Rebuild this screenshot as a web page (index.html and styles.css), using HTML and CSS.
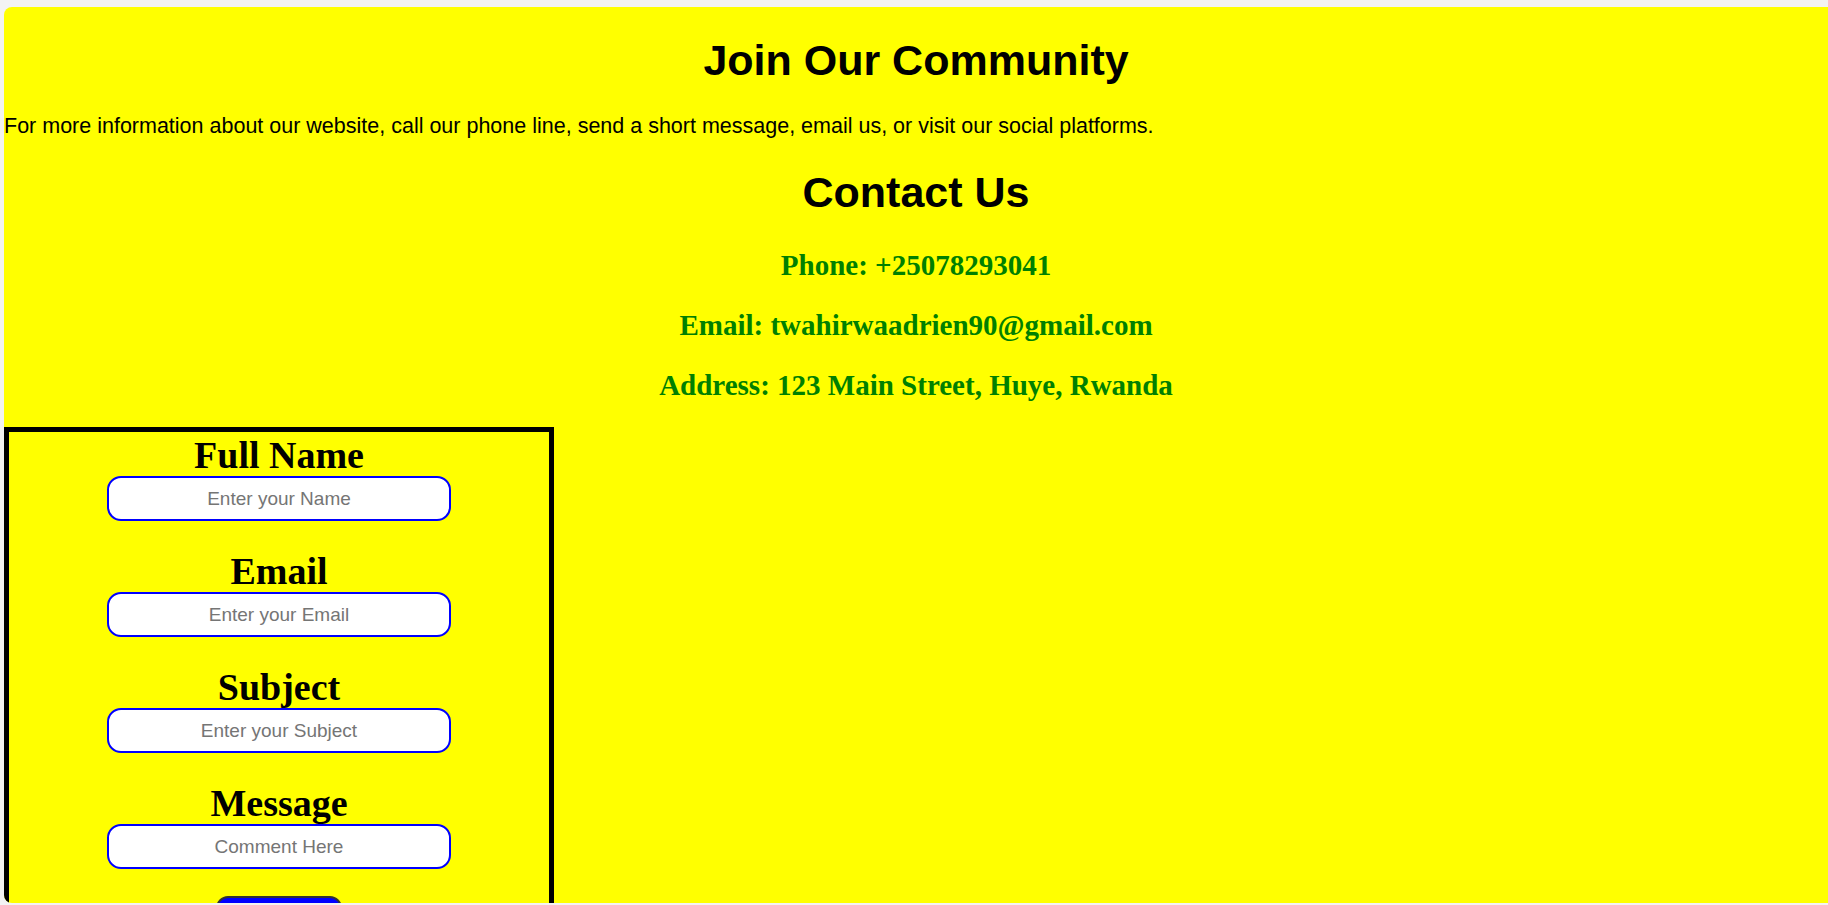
FILE: index.html
```html
<!DOCTYPE html>
<html lang="en">
<head>
<meta charset="utf-8">
<title>Join Our Community</title>
<link rel="stylesheet" href="styles.css">
</head>
<body>
<div class="frame">
  <h1 class="title">Join Our Community</h1>
  <p class="intro">For more information about our website, call our phone line, send a short message, email us, or visit our social platforms.</p>
  <h1 class="title title-contact">Contact Us</h1>
  <div class="contact">
    <p class="contact-line">Phone: +25078293041</p>
    <p class="contact-line">Email: twahirwaadrien90@gmail.com</p>
    <p class="contact-line">Address: 123 Main Street, Huye, Rwanda</p>
  </div>
  <form class="form-box">
    <label class="field-label" for="name">Full Name</label>
    <input class="field-input" id="name" type="text" placeholder="Enter your Name">
    <label class="field-label" for="email">Email</label>
    <input class="field-input" id="email" type="email" placeholder="Enter your Email">
    <label class="field-label" for="subject">Subject</label>
    <input class="field-input" id="subject" type="text" placeholder="Enter your Subject">
    <label class="field-label" for="message">Message</label>
    <input class="field-input" id="message" type="text" placeholder="Comment Here">
    <button class="submit" type="submit">Submit</button>
  </form>
</div>
</body>
</html>
```
FILE: styles.css
```css
html {
  overflow: hidden;
}

body {
  margin: 0;
  padding: 7px 0 2px 4px;
  background: #f3f3f3;
  height: 905px;
  box-sizing: border-box;
}

.frame {
  height: 896px;
  background: #ffff00;
  border-radius: 8px 0 0 8px;
  overflow: hidden;
  font-family: "Liberation Sans", Arial, sans-serif;
  color: #000;
}

.title {
  margin: 29px 0 0;
  font-size: 43px;
  line-height: 49px;
  font-weight: bold;
  text-align: center;
}

.intro {
  margin: 29px 0 0;
  font-size: 21.5px;
  line-height: 25px;
}

.contact {
  margin-top: 33px;
  display: flex;
  flex-direction: column;
  gap: 30px;
}

.contact-line {
  margin: 0;
  font-family: "Liberation Serif", "Times New Roman", serif;
  font-weight: bold;
  font-size: 29px;
  line-height: 30px;
  color: #008000;
  text-align: center;
}

.form-box {
  margin-top: 27px;
  width: 540px;
  height: 600px;
  border: 5px solid #000;
  padding-top: 2px;
  display: flex;
  flex-direction: column;
  align-items: center;
}

.field-label {
  display: block;
  font-family: "Liberation Serif", "Times New Roman", serif;
  font-weight: bold;
  font-size: 38px;
  line-height: 42px;
}

.field-input + .field-label {
  margin-top: 29px;
}

.field-input {
  width: 344px;
  height: 45px;
  box-sizing: border-box;
  border: 2px solid #0000ff;
  border-radius: 14px;
  background: #fff;
  font-family: "Liberation Sans", Arial, sans-serif;
  font-size: 19px;
  text-align: center;
  outline: none;
}

.field-input::placeholder {
  color: #757575;
}

.submit {
  margin-top: 27px;
  width: 126px;
  height: 42px;
  background: #0000ff;
  color: #fff;
  border: 2px solid #333;
  border-radius: 12px;
  font-family: "Liberation Sans", Arial, sans-serif;
  font-size: 19px;
}
```
